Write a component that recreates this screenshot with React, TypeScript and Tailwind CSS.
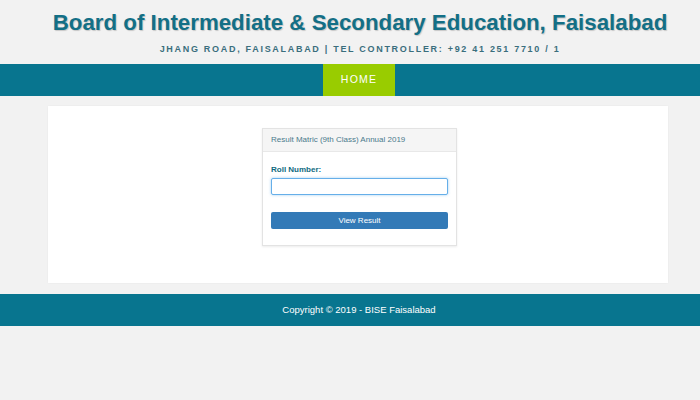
export default function App() {
  return (
    <div className="min-h-[400px] bg-[#f2f2f2] font-['Liberation_Sans',Arial,sans-serif]">
      {/* Header */}
      <header className="pl-[20px] pt-[9px] text-center">
        <h1 className="text-[22.3px] font-bold leading-[28px] text-[#136f86] [text-shadow:1px_1px_1px_rgba(0,0,0,0.18)]">
          Board of Intermediate &amp; Secondary Education, Faisalabad
        </h1>
        <p className="mt-[5px] text-[9px] leading-[14px] font-bold tracking-[1.7px] text-[#3a6e7d]">
          JHANG ROAD, FAISALABAD | TEL CONTROLLER: +92 41 251 7710 / 1
        </p>
      </header>

      {/* Nav */}
      <nav className="mt-[8px] flex h-[32px] justify-center bg-[#08758f] pl-[18px]">
        <a className="flex w-[72px] items-center justify-center bg-[#99cc00] text-[10.5px] tracking-[1.2px] text-white">
          HOME
        </a>
      </nav>

      {/* Main */}
      <main className="ml-[48px] mr-[32px] mt-[10px] flex h-[177px] justify-center bg-white pl-[3px] pt-[22px] shadow-[0_0_2px_rgba(0,0,0,0.05)]">
        <div className="h-[118px] w-[195px] border border-[#e3e3e3] shadow-[0_1px_2px_rgba(0,0,0,0.08)]">
          <div className="h-[23px] border-b border-[#e8e8e8] bg-[#f5f5f5] px-[8px] text-[8px] leading-[22px] text-[#4a7a8c]">
            Result Matric (9th Class) Annual 2019
          </div>
          <div className="px-[8px] pt-[13px]">
            <label className="block text-[8px] font-bold leading-[10px] text-[#0f6a80]">Roll Number:</label>
            <input className="mt-[3px] block h-[17px] w-full rounded-[2px] border border-[#66afe9] bg-white shadow-[0_0_3px_rgba(102,175,233,0.6)] outline-none" />
            <button className="mt-[17px] block h-[17px] w-full rounded-[2px] bg-[#337ab7] text-[8px] text-white">
              View Result
            </button>
          </div>
        </div>
      </main>

      {/* Footer */}
      <footer className="mt-[11px] flex h-[32px] items-center justify-center bg-[#08758f] pl-[18px] text-[9.5px] text-white">
        Copyright © 2019 - BISE Faisalabad
      </footer>
    </div>
  );
}
